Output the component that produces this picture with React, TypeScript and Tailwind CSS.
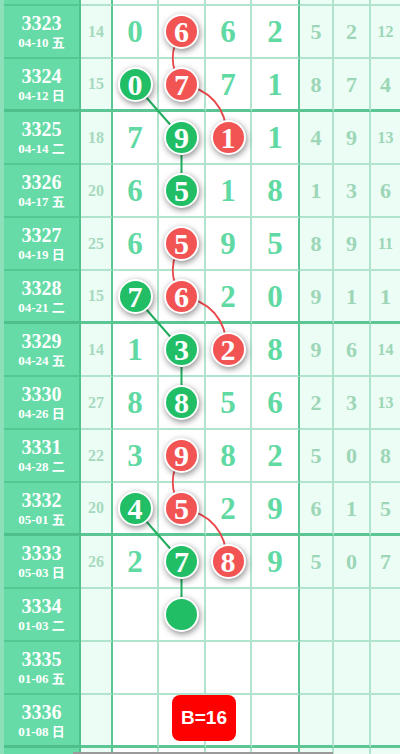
import React from "react";

type Kind = "g" | "r" | "e";
type RowData = {
  p: string;
  d: string;
  s?: number;
  n?: number[];
  b?: Record<number, Kind>;
  sm?: number[];
  thick?: boolean;
};

const rows: RowData[] = [
  { p: "3323", d: "04-10 五", s: 14, n: [0, 6, 6, 2], b: { 1: "r" }, sm: [5, 2, 12] },
  { p: "3324", d: "04-12 日", s: 15, n: [0, 7, 7, 1], b: { 0: "g", 1: "r" }, sm: [8, 7, 4], thick: true },
  { p: "3325", d: "04-14 二", s: 18, n: [7, 9, 1, 1], b: { 1: "g", 2: "r" }, sm: [4, 9, 13] },
  { p: "3326", d: "04-17 五", s: 20, n: [6, 5, 1, 8], b: { 1: "g" }, sm: [1, 3, 6] },
  { p: "3327", d: "04-19 日", s: 25, n: [6, 5, 9, 5], b: { 1: "r" }, sm: [8, 9, 11] },
  { p: "3328", d: "04-21 二", s: 15, n: [7, 6, 2, 0], b: { 0: "g", 1: "r" }, sm: [9, 1, 1], thick: true },
  { p: "3329", d: "04-24 五", s: 14, n: [1, 3, 2, 8], b: { 1: "g", 2: "r" }, sm: [9, 6, 14] },
  { p: "3330", d: "04-26 日", s: 27, n: [8, 8, 5, 6], b: { 1: "g" }, sm: [2, 3, 13] },
  { p: "3331", d: "04-28 二", s: 22, n: [3, 9, 8, 2], b: { 1: "r" }, sm: [5, 0, 8] },
  { p: "3332", d: "05-01 五", s: 20, n: [4, 5, 2, 9], b: { 0: "g", 1: "r" }, sm: [6, 1, 5], thick: true },
  { p: "3333", d: "05-03 日", s: 26, n: [2, 7, 8, 9], b: { 1: "g", 2: "r" }, sm: [5, 0, 7] },
  { p: "3334", d: "01-03 二", b: { 1: "e" } },
  { p: "3335", d: "01-06 五" },
  { p: "3336", d: "01-08 日", thick: true },
];

const serif = { fontFamily: '"Liberation Serif", "Noto Sans CJK SC", serif' };

function Ball({ kind, v }: { kind: Kind; v?: number }) {
  const bg = kind === "r" ? "bg-[#f25454]" : "bg-[#22be66]";
  return (
    <div
      className={`relative z-10 w-[35px] h-[35px] rounded-full border-2 border-white ${bg} shadow-[1px_2px_6px_rgba(0,0,0,0.45)] flex items-center justify-center text-white text-[30px] font-bold leading-none`}
    >
      {kind === "e" ? null : <span className="mt-[1px]">{v}</span>}
    </div>
  );
}

function Row({ r }: { r: RowData }) {
  const bb = r.thick ? "border-b-[3px] border-b-[#5cc594]" : "border-b-2 border-b-[#b1e4cc]";
  const bbL = r.thick ? "border-b-[3px] border-b-[#4fc08c]" : "border-b-2 border-b-[#55c792]";
  const widths = ["w-[46px] border-r-2 border-r-[#b1e4cc]", "w-[47px] border-r-2 border-r-[#b1e4cc]", "w-[46px] border-r-2 border-r-[#b1e4cc]", "w-[48px] border-r-2 border-r-[#5cc594]"];
  const smw = ["w-[34px] border-r-2 border-r-[#b1e4cc]", "w-[37px] border-r-2 border-r-[#b1e4cc]", "flex-1"];
  return (
    <div className="flex h-[53px]">
      <div className="w-[4px] shrink-0 bg-[#8ddfb9]" />
      <div
        className={`w-[77px] shrink-0 bg-[#66dba8] border-r-2 border-r-[#4fc28d] ${bbL} flex flex-col items-center justify-center text-white font-bold`}
      >
        <div className="text-[20px] leading-[22px]">{r.p}</div>
        <div className="text-[13px] leading-[16px] mt-[1px]">{r.d}</div>
      </div>
      <div
        className={`w-[32px] shrink-0 bg-[#ebfdf4] border-r-2 border-r-[#5cc594] ${bb} flex items-center justify-center text-[16px] font-bold text-[#a6d9be]`}
      >
        {r.s}
      </div>
      {widths.map((w, i) => (
        <div key={i} className={`${w} shrink-0 bg-white ${bb} flex items-center justify-center`}>
          {r.b && r.b[i] ? (
            <Ball kind={r.b[i]} v={r.n ? r.n[i] : undefined} />
          ) : r.n ? (
            <span className="text-[31px] font-bold leading-none text-[#60d9a3]">{r.n[i]}</span>
          ) : null}
        </div>
      ))}
      {smw.map((w, i) => (
        <div key={i} className={`${w} shrink-0 bg-[#ebfdf4] ${bb} flex items-center justify-center font-bold text-[#9dd6b7]`}>
          {r.sm ? (
            <span className={r.sm[i] >= 10 ? "text-[16px]" : "text-[22px]"}>{r.sm[i]}</span>
          ) : null}
        </div>
      ))}
    </div>
  );
}

function PartialRow({ h, border }: { h: string; border: boolean }) {
  const bb = border ? "border-b-2 border-b-[#b1e4cc]" : "";
  const bbL = border ? "border-b-2 border-b-[#55c792]" : "";
  return (
    <div className={`flex ${h}`}>
      <div className="w-[4px] shrink-0 bg-[#8ddfb9]" />
      <div className={`w-[77px] shrink-0 bg-[#66dba8] border-r-2 border-r-[#4fc28d] ${bbL}`} />
      <div className={`w-[32px] shrink-0 bg-[#ebfdf4] border-r-2 border-r-[#5cc594] ${bb}`} />
      <div className={`w-[46px] shrink-0 bg-white border-r-2 border-r-[#b1e4cc] ${bb}`} />
      <div className={`w-[47px] shrink-0 bg-white border-r-2 border-r-[#b1e4cc] ${bb}`} />
      <div className={`w-[46px] shrink-0 bg-white border-r-2 border-r-[#b1e4cc] ${bb}`} />
      <div className={`w-[48px] shrink-0 bg-white border-r-2 border-r-[#5cc594] ${bb}`} />
      <div className={`w-[34px] shrink-0 bg-[#ebfdf4] border-r-2 border-r-[#b1e4cc] ${bb}`} />
      <div className={`w-[37px] shrink-0 bg-[#ebfdf4] border-r-2 border-r-[#b1e4cc] ${bb}`} />
      <div className={`flex-1 bg-[#ebfdf4] ${bb}`} />
    </div>
  );
}

export default function App() {
  const g = "#1fae5e";
  const red = "#e9474c";
  return (
    <div className="relative w-[400px] h-[754px] overflow-hidden bg-white" style={serif}>
      <PartialRow h="h-[6px]" border />
      {rows.map((r) => (
        <Row key={r.p} r={r} />
      ))}
      <PartialRow h="h-[6px]" border={false} />

      <svg className="absolute left-0 top-0 z-0 pointer-events-none" width={400} height={754}>
        <g stroke={g} strokeWidth={2} fill="none">
          <path d="M135 84.5 L181.5 137.5" />
          <path d="M181.5 137.5 L181.5 190.5" />
          <path d="M135 296.5 L181.5 349.5" />
          <path d="M181.5 349.5 L181.5 402.5" />
          <path d="M135 508.5 L181.5 561.5" />
          <path d="M181.5 561.5 L181.5 614.5" />
        </g>
        <g stroke={red} strokeWidth={1.8} fill="none">
          <path d="M181.5 31.5 Q164 58 181.5 84.5" />
          <path d="M181.5 84.5 Q224 91 228 137.5" />
          <path d="M181.5 243.5 Q164 270 181.5 296.5" />
          <path d="M181.5 296.5 Q224 303 228 349.5" />
          <path d="M181.5 455.5 Q164 482 181.5 508.5" />
          <path d="M181.5 508.5 Q224 515 228 561.5" />
        </g>
      </svg>

      <div
        className="absolute left-[172px] top-[695px] z-20 w-[64px] h-[46px] rounded-lg bg-[#ff0000] flex items-center justify-center text-white text-[19px] font-bold"
        style={{ fontFamily: '"Liberation Sans", Arial, sans-serif' }}
      >
        B=16
      </div>
      <div className="absolute left-[73px] top-[752px] w-[260px] h-[2px] bg-[#9a9a9a]" />
    </div>
  );
}
